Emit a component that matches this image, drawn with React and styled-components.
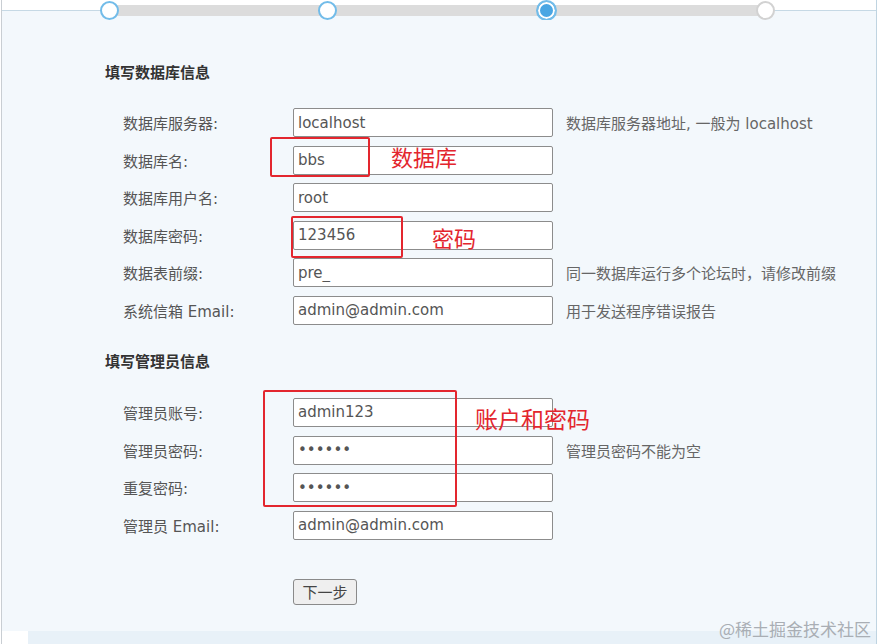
import styled, { createGlobalStyle } from 'styled-components'

const GlobalStyle = createGlobalStyle`
  html, body {
    margin: 0;
    padding: 0;
    background: #ffffff;
  }
  body {
    font-family: "DejaVu Sans", "Noto Sans CJK SC", sans-serif;
  }
`

const Root = styled.div`
  position: relative;
  width: 879px;
  height: 644px;
  overflow: hidden;
`

const Frame = styled.div`
  display: flex;
  flex-direction: column;
  height: 644px;
  margin: 0 2px 0 1px;
  border-left: 1px solid #c9ced3;
  border-right: 1px solid #bfd4e1;
  box-sizing: border-box;
`

const Stepper = styled.div`
  height: 20px;
  flex-shrink: 0;
  background: linear-gradient(
    to bottom,
    #ffffff 0,
    #ffffff 10px,
    #c6d9e5 10px,
    #c6d9e5 11px,
    #f3f8fc 11px
  );
`

const Track = styled.div`
  display: flex;
  align-items: center;
  justify-content: space-between;
  height: 20px;
  width: 675px;
  margin-left: 98px;
  background: linear-gradient(#dcdcdc, #dcdcdc) no-repeat center / calc(100% - 18px) 11px;
`

const Dot = styled.span`
  box-sizing: border-box;
  width: ${(p) => (p.$state === 'active' ? '21px' : '19px')};
  height: ${(p) => (p.$state === 'active' ? '21px' : '19px')};
  border-radius: 50%;
  border: 2px solid ${(p) => (p.$state === 'todo' ? '#d2d2d2' : '#72bce9')};
  background: ${(p) => (p.$state === 'active' ? '#4aa6e3' : '#ffffff')};
  box-shadow: ${(p) => (p.$state === 'active' ? 'inset 0 0 0 2px #ffffff' : 'none')};
`

const Panel = styled.div`
  flex: 1;
  background: #f3f8fc;
  padding: 42px 0 0 103px;
`

const Section = styled.section`
  margin-bottom: ${(p) => p.$gap || 0}px;
`

const Title = styled.h3`
  margin: 0 0 ${(p) => p.$after || 26}px;
  font-family: "Noto Sans CJK SC", sans-serif;
  font-size: 15px;
  line-height: 20px;
  font-weight: 700;
  color: #333333;
`

const Rows = styled.div`
  display: grid;
  grid-template-columns: 157px 260px auto;
  grid-auto-rows: 29px;
  row-gap: 8.6px;
  column-gap: 13px;
  align-items: center;
  margin-left: 18px;
`

const Label = styled.label`
  font-size: 15px;
  color: #555555;
  white-space: nowrap;
`

const Field = styled.input`
  box-sizing: border-box;
  width: 260px;
  height: 29px;
  padding: 0 4px;
  border: 1px solid #8c8c8c;
  border-radius: 2px;
  background: #ffffff;
  font-family: "DejaVu Sans", "Noto Sans CJK SC", sans-serif;
  font-size: 15px;
  color: #555555;
  outline: none;
`

const Hint = styled.span`
  font-size: 15px;
  color: #666666;
  white-space: nowrap;
`

const Actions = styled.div`
  margin: 39px 0 0 188px;
`

const NextButton = styled.button`
  box-sizing: border-box;
  width: 64px;
  height: 26px;
  padding: 0;
  border: 1px solid #8a8a8a;
  border-radius: 3px;
  background: #efefef;
  font-family: "Noto Sans CJK SC", sans-serif;
  font-size: 15px;
  color: #444444;
`

const Strip = styled.div`
  height: 13px;
  flex-shrink: 0;
  margin-left: 26px;
  background: #e8f1f8;
`

const Mark = styled.div`
  position: absolute;
  box-sizing: border-box;
  border: 2px solid #e3262e;
  border-radius: 2px;
`

const Note = styled.span`
  position: absolute;
  font-family: "Noto Sans CJK SC", sans-serif;
  font-size: ${(p) => p.$size || 22}px;
  line-height: 1;
  color: #e3262e;
  white-space: nowrap;
`

const Watermark = styled.span`
  position: absolute;
  right: 8px;
  bottom: 7px;
  font-family: "Noto Sans CJK SC", sans-serif;
  font-size: 17px;
  line-height: 1;
  color: #a9aeb4;
`

const dbRows = [
  { label: '数据库服务器:', value: 'localhost', hint: '数据库服务器地址, 一般为 localhost' },
  { label: '数据库名:', value: 'bbs' },
  { label: '数据库用户名:', value: 'root' },
  { label: '数据库密码:', value: '123456' },
  { label: '数据表前缀:', value: 'pre_', hint: '同一数据库运行多个论坛时，请修改前缀' },
  { label: '系统信箱 Email:', value: 'admin@admin.com', hint: '用于发送程序错误报告' },
]

const adminRows = [
  { label: '管理员账号:', value: 'admin123' },
  { label: '管理员密码:', value: '123456', type: 'password', hint: '管理员密码不能为空' },
  { label: '重复密码:', value: '123456', type: 'password' },
  { label: '管理员 Email:', value: 'admin@admin.com' },
]

const FormRows = ({ rows }) => (
  <Rows>
    {rows.map((r) => (
      <div key={r.label} style={{ display: 'contents' }}>
        <Label>{r.label}</Label>
        <Field type={r.type || 'text'} defaultValue={r.value} readOnly />
        <Hint>{r.hint || ''}</Hint>
      </div>
    ))}
  </Rows>
)

export default function App() {
  return (
    <>
      <GlobalStyle />
      <Root>
        <Frame>
          <Stepper>
            <Track>
              <Dot $state="done" />
              <Dot $state="done" />
              <Dot $state="active" />
              <Dot $state="todo" />
            </Track>
          </Stepper>
          <Panel>
            <Section $gap={26}>
              <Title>填写数据库信息</Title>
              <FormRows rows={dbRows} />
            </Section>
            <Section>
              <Title $after={27}>填写管理员信息</Title>
              <FormRows rows={adminRows} />
            </Section>
            <Actions>
              <NextButton type="button">下一步</NextButton>
            </Actions>
          </Panel>
          <Strip />
        </Frame>

        <Mark style={{ left: 270, top: 137, width: 100, height: 40 }} />
        <Note style={{ left: 391, top: 145 }}>数据库</Note>
        <Mark style={{ left: 291, top: 216, width: 112, height: 42 }} />
        <Note style={{ left: 432, top: 226 }}>密码</Note>
        <Mark style={{ left: 263, top: 390, width: 194, height: 117 }} />
        <Note $size={23} style={{ left: 475, top: 407 }}>账户和密码</Note>
        <Watermark>@稀土掘金技术社区</Watermark>
      </Root>
    </>
  )
}
